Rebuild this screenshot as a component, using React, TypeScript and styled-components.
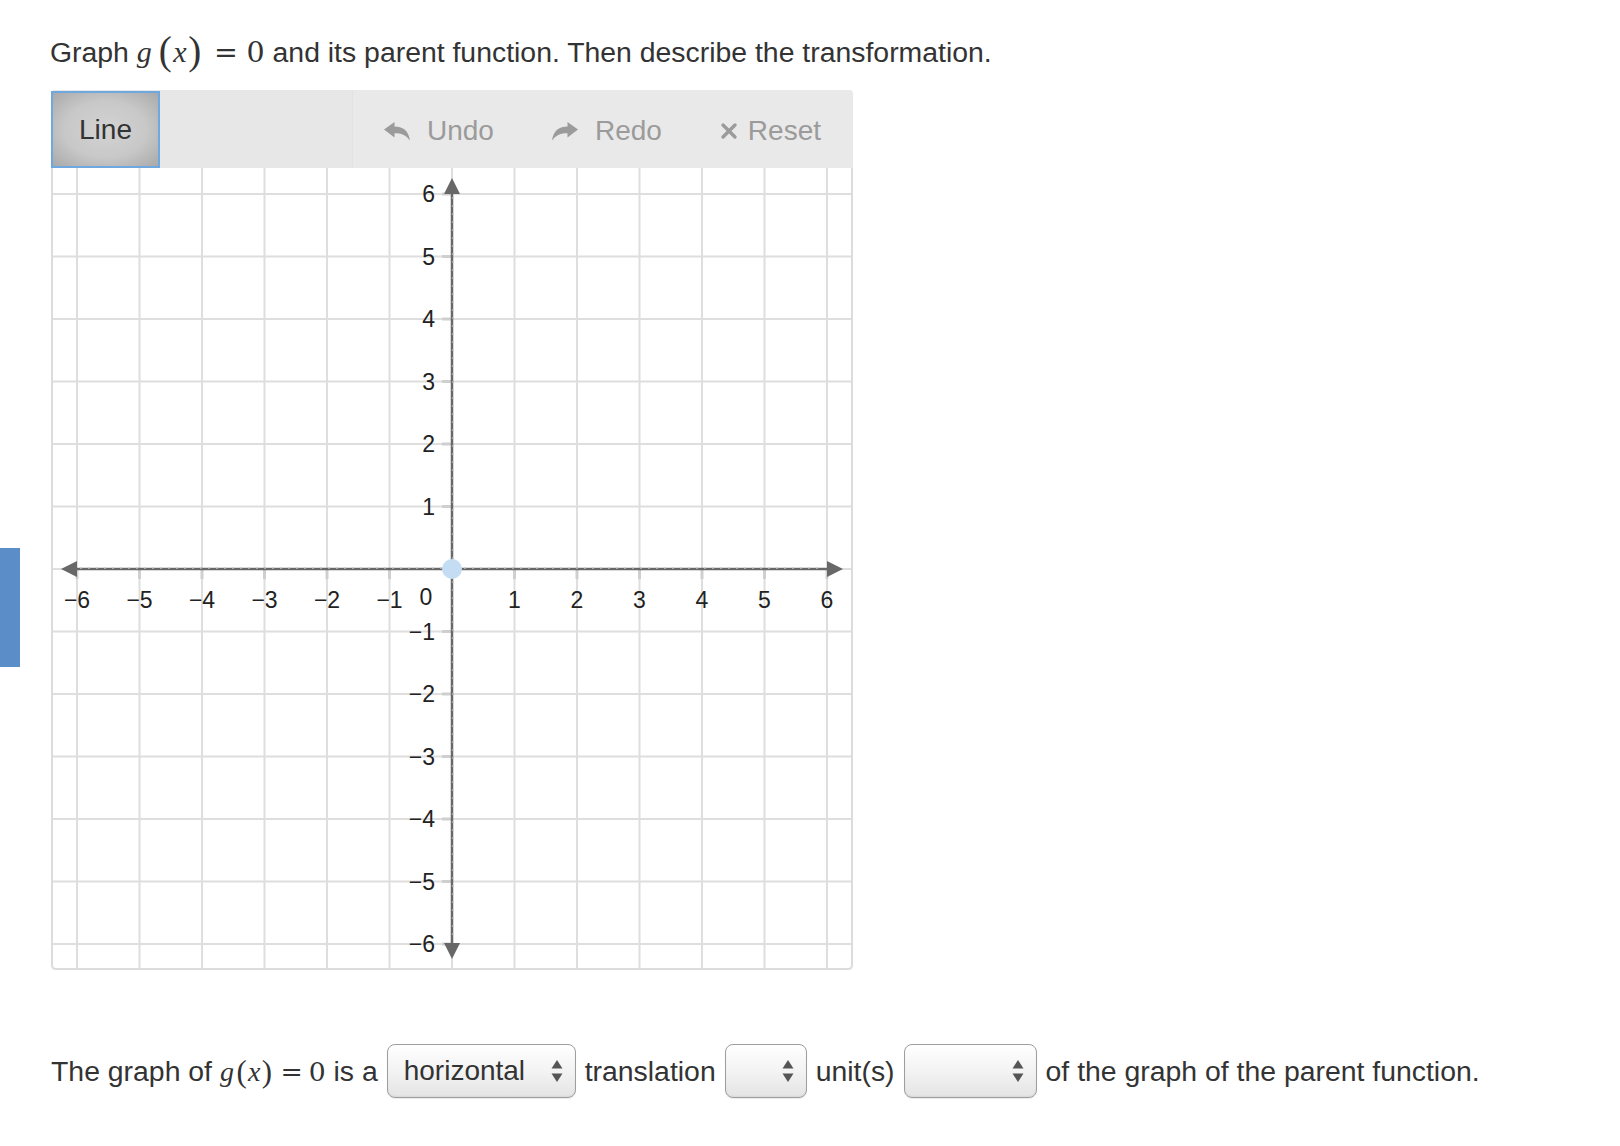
import React from "react";
import styled, { createGlobalStyle } from "styled-components";

const GlobalStyle = createGlobalStyle`
  html, body { margin: 0; padding: 0; background: #ffffff; }
  body {
    font-family: "Liberation Sans", Arial, sans-serif;
    color: #333333;
  }
`;

const Page = styled.div`
  position: relative;
  width: 1620px;
  min-height: 1146px;
  padding: 33px 0 0 50px;
  box-sizing: border-box;
`;

const SideTab = styled.div`
  position: absolute;
  left: 0;
  top: 548px;
  width: 20px;
  height: 119px;
  background: #5b8ec8;
`;

const Title = styled.div`
  font-size: 28.4px;
  line-height: 32px;
  height: 32px;
  white-space: nowrap;
  color: #333;
`;

const MathWrap = styled.span<{ $size: number }>`
  font-family: "Liberation Serif", "DejaVu Serif", serif;
  font-size: ${(p) => p.$size}px;
  white-space: nowrap;
  color: #333;
`;

const MVar = styled.span<{ $after?: number }>`
  font-style: italic;
  margin-right: ${(p) => p.$after ?? 0}em;
`;

const MParen = styled.span<{ $scale: number }>`
  font-size: ${(p) => p.$scale}em;
  position: relative;
  top: 0.06em;
  margin: 0 0.04em;
`;

const MOp = styled.span<{ $left: number; $right: number }>`
  font-family: "DejaVu Serif", "Liberation Serif", serif;
  font-size: 0.95em;
  margin: 0 ${(p) => p.$right}em 0 ${(p) => p.$left}em;
`;

const MNum = styled.span`
  font-family: "DejaVu Serif", "Liberation Serif", serif;
  font-size: 0.95em;
`;

const Widget = styled.div`
  margin-top: 25px;
  width: 802px;
  margin-left: 1px;
`;

const Toolbar = styled.div`
  display: flex;
  align-items: stretch;
  height: 78px;
  background: #e7e7e7;
  border-radius: 4px 4px 0 0;
`;

const ModeButton = styled.div`
  display: flex;
  align-items: center;
  justify-content: center;
  width: 109px;
  margin: 1px 0 0 0;
  box-sizing: border-box;
  border: 2px solid #6fa8de;
  background: radial-gradient(ellipse at center, #d3d3d3 0%, #c8c8c8 55%, #a9a9a9 100%);
  font-size: 28px;
  color: #333;
`;

const ActionGroup = styled.div`
  margin-left: auto;
  display: flex;
  align-items: stretch;
  background: #e9e9e9;
  border-left: 1px solid #e2e2e2;
  border-radius: 0 4px 0 0;
`;

const ActionButton = styled.div<{ $gap: number; $right: number }>`
  display: flex;
  align-items: center;
  gap: ${(p) => p.$gap}px;
  padding: 4px ${(p) => p.$right}px 0 31px;
  font-size: 28px;
  color: #9b9b9b;
`;

const GridSvg = styled.svg`
  display: block;
  font-family: "Liberation Sans", Arial, sans-serif;
`;

const Sentence = styled.div`
  margin-top: 74px;
  display: flex;
  align-items: center;
  gap: 9px;
  font-size: 28.4px;
  color: #333;
  white-space: nowrap;
  padding-left: 1px;
`;

const SelectBox = styled.div<{ $w: number }>`
  position: relative;
  display: flex;
  align-items: center;
  width: ${(p) => p.$w}px;
  height: 54px;
  box-sizing: border-box;
  padding-left: 16px;
  border: 1.5px solid #9e9e9e;
  border-radius: 8px;
  background: linear-gradient(#ffffff 0%, #f3f3f3 50%, #e4e4e4 100%);
  box-shadow: inset 0 -1px 2px rgba(0, 0, 0, 0.06), 0 1px 1px rgba(0, 0, 0, 0.08);
  font-size: 28px;
  color: #333;
`;

const SelectArrows = styled.svg`
  position: absolute;
  right: 12px;
  top: 50%;
  transform: translateY(-50%);
`;

const U = 62.5;
const C = 401;
const SIZE = 802;
const range = [-6, -5, -4, -3, -2, -1, 0, 1, 2, 3, 4, 5, 6];
const fmt = (n: number) => (n < 0 ? `\u2212${-n}` : `${n}`);

function MathG({ size, scale, left, right, gap }: { size: number; scale: number; left: number; right: number; gap: number }) {
  return (
    <MathWrap $size={size}>
      <MVar $after={gap}>g</MVar>
      <MParen $scale={scale}>(</MParen>
      <MVar>x</MVar>
      <MParen $scale={scale}>)</MParen>
      <MOp $left={left} $right={right}>=</MOp>
      <MNum>0</MNum>
    </MathWrap>
  );
}

function UndoIcon({ flip }: { flip?: boolean }) {
  return (
    <svg width="26" height="19" viewBox="0 0 26 19" style={flip ? { transform: "scaleX(-1)" } : undefined}>
      <path
        d="M0 7.5 L10.5 0 L10.5 4.5 C18.5 4.5 24.5 8 26 18.5 C22 13 17 11.2 10.5 11.2 L10.5 15.5 Z"
        fill="#9b9b9b"
      />
    </svg>
  );
}

function CloseIcon() {
  return (
    <svg width="18" height="18" viewBox="0 0 18 18">
      <path d="M3 3 L15 15 M15 3 L3 15" stroke="#9b9b9b" strokeWidth="3.4" strokeLinecap="round" />
    </svg>
  );
}

function Arrows() {
  return (
    <SelectArrows width="12" height="22" viewBox="0 0 12 22">
      <path d="M6 0 L11.5 8.5 L0.5 8.5 Z" fill="#555" />
      <path d="M6 22 L11.5 13.5 L0.5 13.5 Z" fill="#555" />
    </SelectArrows>
  );
}

function Grid() {
  return (
    <GridSvg width={SIZE} height={SIZE} viewBox={`0 0 ${SIZE} ${SIZE}`}>
      <rect x="0" y="0" width={SIZE} height={SIZE} fill="#fff" />
      {range.map((i) => (
        <g key={`g${i}`}>
          <line x1={C + i * U} y1={0} x2={C + i * U} y2={SIZE} stroke="#dedede" strokeWidth="2" />
          <line x1={0} y1={C - i * U} x2={SIZE} y2={C - i * U} stroke="#dedede" strokeWidth="2" />
        </g>
      ))}
      <path
        d={`M1 0 L1 ${SIZE - 5} Q1 ${SIZE - 1} 5 ${SIZE - 1} L${SIZE - 5} ${SIZE - 1} Q${SIZE - 1} ${SIZE - 1} ${SIZE - 1} ${SIZE - 5} L${SIZE - 1} 0`}
        fill="none"
        stroke="#dcdcdc"
        strokeWidth="2"
      />
      {range
        .filter((i) => i !== 0)
        .map((i) => (
          <g key={`t${i}`}>
            <line x1={C + i * U} y1={C} x2={C + i * U} y2={C + 10} stroke="#cfcfcf" strokeWidth="3" />
            <line x1={C - 10} y1={C - i * U} x2={C} y2={C - i * U} stroke="#cfcfcf" strokeWidth="3" />
          </g>
        ))}
      <line x1={C - 378} y1={C} x2={C + 378} y2={C} stroke="#686868" strokeWidth="2.5" />
      <line x1={C} y1={C - 378} x2={C} y2={C + 378} stroke="#686868" strokeWidth="2.5" />
      <line x1={C - 372} y1={C - 0.6} x2={C + 372} y2={C - 0.6} stroke="#a6a6a6" strokeWidth="1.4" strokeDasharray="2 6" />
      <line x1={C + 0.6} y1={C - 372} x2={C + 0.6} y2={C + 372} stroke="#a6a6a6" strokeWidth="1.4" strokeDasharray="2 6" />
      <polygon points={`${C - 391},${C} ${C - 375},${C - 8} ${C - 375},${C + 8}`} fill="#686868" />
      <polygon points={`${C + 391},${C} ${C + 375},${C - 8} ${C + 375},${C + 8}`} fill="#686868" />
      <polygon points={`${C},${C - 391} ${C - 8},${C - 375} ${C + 8},${C - 375}`} fill="#686868" />
      <polygon points={`${C},${C + 390} ${C - 8},${C + 374} ${C + 8},${C + 374}`} fill="#686868" />
      {range
        .filter((i) => i !== 0)
        .map((i) => (
          <g key={`l${i}`}>
            <text x={C + i * U} y={C + 31} textAnchor="middle" dominantBaseline="central" fontSize="23" fill="#222">
              {fmt(i)}
            </text>
            <text x={C - 17} y={C - i * U} textAnchor="end" dominantBaseline="central" fontSize="23" fill="#222">
              {fmt(i)}
            </text>
          </g>
        ))}
      <text x={C - 26} y={C + 28} textAnchor="middle" dominantBaseline="central" fontSize="23" fill="#222">
        0
      </text>
      <circle cx={C} cy={C} r="10" fill="#c5ddf3" />
    </GridSvg>
  );
}

export default function App() {
  return (
    <>
      <GlobalStyle />
      <Page>
        <SideTab />
        <Title>
          Graph <MathG size={30} scale={1.3} left={0.4} right={0.3} gap={0.18} /> and its parent function. Then
          describe the transformation.
        </Title>
        <Widget>
          <Toolbar>
            <ModeButton>Line</ModeButton>
            <ActionGroup>
              <ActionButton $gap={17} $right={27}>
                <UndoIcon />
                Undo
              </ActionButton>
              <ActionButton $gap={17} $right={27}>
                <UndoIcon flip />
                Redo
              </ActionButton>
              <ActionButton $gap={10} $right={32}>
                <CloseIcon />
                Reset
              </ActionButton>
            </ActionGroup>
          </Toolbar>
          <Grid />
        </Widget>
        <Sentence>
          <span>
            The graph of <MathG size={28} scale={1.1} left={0.28} right={0.22} gap={0.05} /> is a
          </span>
          <SelectBox $w={189}>
            horizontal
            <Arrows />
          </SelectBox>
          <span>translation</span>
          <SelectBox $w={82}>
            <Arrows />
          </SelectBox>
          <span>unit(s)</span>
          <SelectBox $w={133}>
            <Arrows />
          </SelectBox>
          <span>of the graph of the parent function.</span>
        </Sentence>
      </Page>
    </>
  );
}
